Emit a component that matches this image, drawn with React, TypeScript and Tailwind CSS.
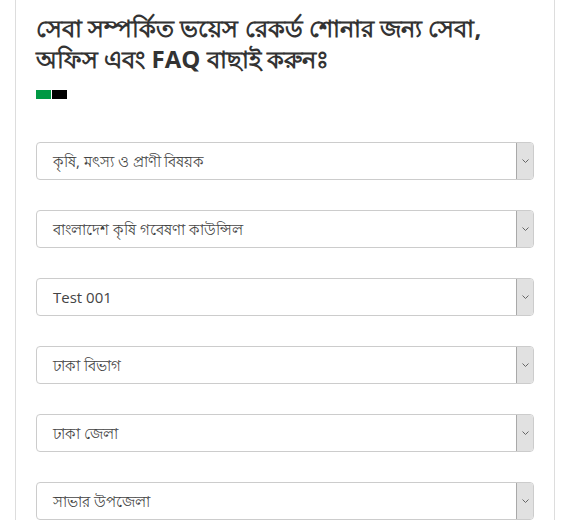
const options = [
  'কৃষি, মৎস্য ও প্রাণী বিষয়ক',
  'বাংলাদেশ কৃষি গবেষণা কাউন্সিল',
  'Test 001',
  'ঢাকা বিভাগ',
  'ঢাকা জেলা',
  'সাভার উপজেলা',
];

const SelectBox = ({ label }: { label: string }) => (
  <div className="flex h-[38px] w-full items-stretch rounded-[4px] border border-[#cccccc] bg-white">
    <div className="flex flex-1 items-center pl-4 text-[15px] text-[#444444]">{label}</div>
    <div className="flex w-[17px] items-center justify-center rounded-r-[3px] border-l border-[#a9a9a9] bg-[#e1e1e1]">
      <svg width="7" height="4" viewBox="0 0 7 4" fill="none">
        <path d="M0.5 0.5 L3.5 3.5 L6.5 0.5" stroke="#666" strokeWidth="1" />
      </svg>
    </div>
  </div>
);

export default function App() {
  return (
    <div className="min-h-[520px] bg-white pl-[15px] font-['Open_Sans','Noto_Sans',sans-serif]" style={{ width: 570 }}>
      <div className="h-[520px] w-[540px] overflow-hidden border-x border-[#dddddd] px-5 pt-[12px]">
        <h2 className="text-[24px] font-bold leading-[31px] text-[#333333]">
          সেবা সম্পর্কিত ভয়েস রেকর্ড শোনার জন্য সেবা, অফিস এবং FAQ বাছাই করুনঃ
        </h2>
        <div className="mt-[16px] flex gap-[1px]">
          <span className="h-[9px] w-[15px] bg-[#009944]" />
          <span className="h-[9px] w-[15px] bg-black" />
        </div>
        <div className="mt-[43px] flex flex-col gap-[30px]">
          {options.map((o) => (
            <SelectBox key={o} label={o} />
          ))}
        </div>
      </div>
    </div>
  );
}
